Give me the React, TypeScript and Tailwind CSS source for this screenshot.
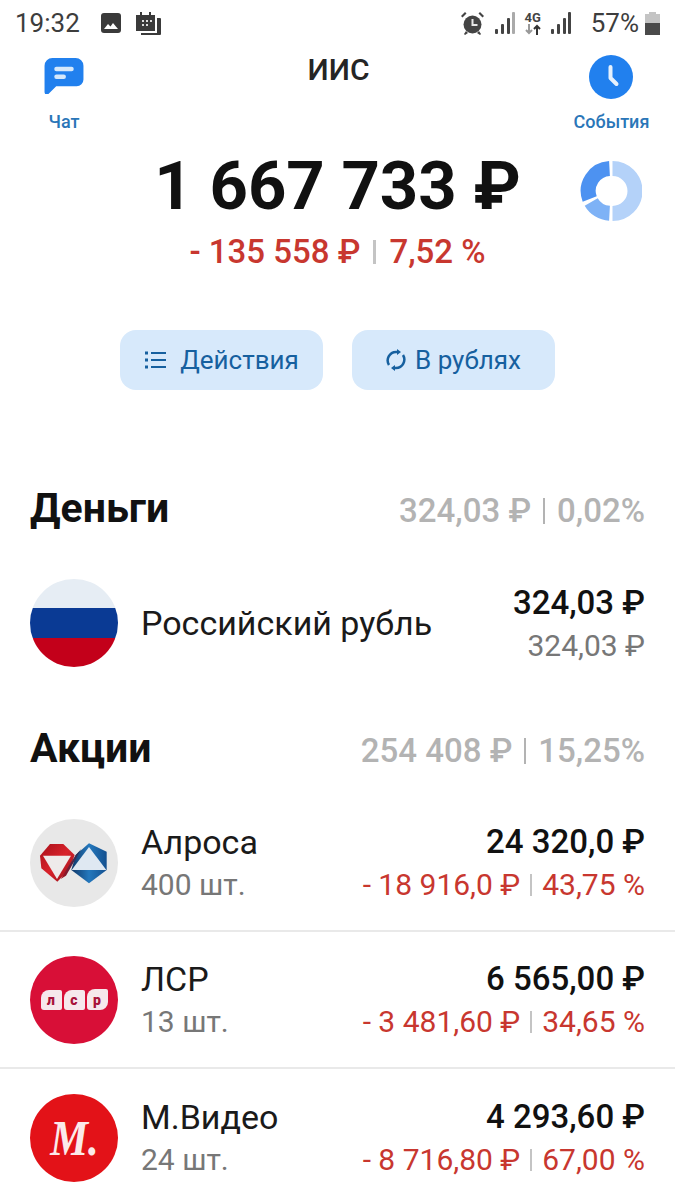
const Signal = ({ third, fourth }: { third: string; fourth: string }) => (
  <svg width="20" height="22" viewBox="0 0 20 22">
    <rect x="0" y="17" width="3" height="5" rx="1" fill="#444" />
    <rect x="6" y="12" width="3" height="10" rx="1" fill="#444" />
    <rect x="12" y="6" width="3" height="16" rx="1" fill={third} />
    <rect x="17" y="0" width="3" height="22" rx="1" fill={fourth} />
  </svg>
)

const StatusBar = () => (
  <div className="flex h-[46px] items-center justify-between pl-[15px] pr-[15px] text-[#3d3d3d]">
    <div className="flex items-center">
      <span className="text-[26px] leading-none">19:32</span>
      <svg width="20" height="20" viewBox="0 0 20 20" className="ml-[21px]">
        <rect width="20" height="20" rx="3" fill="#3a3a3a" />
        <path d="M3 16l4-5 2.500 2.500L12 10l5 6z" fill="#fff" />
      </svg>
      <svg width="25" height="23" viewBox="0 0 25 23" className="ml-[15px]">
        <path d="M0 3h4V0h2v3h7V0h2v3h4v16H0z" fill="#3a3a3a" />
        <path d="M6 8h2v2H6zM10 8h2v2h-2zM14 8h2v2h-2zM6 12h2v2H6zM10 12h2v2h-2z" fill="#ddd" />
        <path d="M21 6h3a1 1 0 0 1 1 1v15a1 1 0 0 1-1 1H5v-2h16z" fill="#3a3a3a" />
      </svg>
    </div>
    <div className="flex items-center">
      <svg width="23" height="23" viewBox="0 0 23 23">
        <circle cx="11.500" cy="12.500" r="9" fill="#444" />
        <path d="M10.500 7h2v5h4v2h-6z" fill="#e8e8e8" />
        <path d="M0 4l4-4 1.500 1.500-4 4zM23 4l-4-4-1.500 1.500 4 4zM5 19l-2 3 1 1 3-2zM18 19l2 3-1 1-3-2z" fill="#444" />
      </svg>
      <div className="ml-[11px]">
        <Signal third="#444" fourth="#aaa" />
      </div>
      <div className="ml-[10px] flex w-[16px] flex-col items-center">
        <span className="whitespace-nowrap text-[13px] font-bold leading-[12px] text-[#444]">4G</span>
        <svg width="16" height="11" viewBox="0 0 16 11" fill="none" strokeWidth="2">
          <path d="M4 0v9M1 6l3 3 3-3" stroke="#999" />
          <path d="M12 11V2M9 5l3-3 3 3" stroke="#333" />
        </svg>
      </div>
      <div className="ml-[10px]">
        <Signal third="#444" fourth="#444" />
      </div>
      <span className="ml-[20px] text-[26px] leading-none">57%</span>
      <svg width="15" height="23" viewBox="0 0 15 23" className="ml-[6px]">
        <path d="M4 0h7v2h4v21H0V2h4z" fill="#c4c4c4" />
        <path d="M0 11h15v12H0z" fill="#4a4a4a" />
      </svg>
    </div>
  </div>
)

const TopBar = () => (
  <div className="flex items-start justify-between pl-[40px] pr-[25px]">
    <div className="flex w-[48px] flex-col items-center">
      <svg width="40" height="36" viewBox="0 0 40 37" className="mt-[12px]">
        <path d="M8 0h24a8 8 0 0 1 8 8v14a7 7 0 0 1-7 7H12l-8 8c-2 1.500-4 .5-4-2V8a8 8 0 0 1 8-8z" fill="#2180ee" />
        <rect x="10" y="9" width="20" height="4.500" rx="2.250" fill="#d5e8fb" />
        <rect x="10" y="17" width="12" height="4.500" rx="2.250" fill="#d5e8fb" />
      </svg>
      <span className="mt-[17px] whitespace-nowrap text-[18px] font-medium leading-[22px] text-[#2a76b8]">Чат</span>
    </div>
    <span className="ml-[16px] mt-[6px] text-[30px] font-medium leading-[36px] text-[#252525]">ИИС</span>
    <div className="flex w-[77px] flex-col items-center">
      <svg width="44" height="44" viewBox="0 0 44 44" className="mt-[9px]">
        <circle cx="22" cy="22" r="22" fill="#2180ee" />
        <path d="M21.500 12v11l6 6" fill="none" stroke="#e6f1fd" strokeWidth="4" strokeLinecap="round" strokeLinejoin="round" />
      </svg>
      <span className="mt-[12px] whitespace-nowrap text-[18px] font-medium leading-[22px] text-[#2a76b8]">События</span>
    </div>
  </div>
)

const Donut = () => (
  <svg width="62" height="62" viewBox="0 0 62 62" fill="none" strokeWidth="15">
    <path d="M32.500 8.500A22.500 22.500 0 0 1 32.500 53.500" stroke="#b4d2f9" />
    <path d="M29.500 53.300A22.500 22.500 0 0 1 11.200 42" stroke="#7eb2f6" />
    <path d="M9.700 39A22.500 22.500 0 0 1 29.500 8.500" stroke="#4d92f1" />
  </svg>
)

const Summary = () => (
  <div className="relative mt-[14px] flex flex-col items-center">
    <div className="text-[67px] font-bold leading-[78px] text-[#111]">1 667 733 ₽</div>
    <div className="absolute left-[580px] top-[13px]">
      <Donut />
    </div>
    <div className="mt-[7px] flex items-center text-[33px] font-medium leading-[40px] text-[#c8372f]">
      <span>- 135 558 ₽</span>
      <span className="mx-[13px] h-[24px] w-[3px] bg-[#c4c4c4]" />
      <span>7,52 %</span>
    </div>
  </div>
)

const Buttons = () => (
  <div className="mt-[58px] flex justify-center gap-[29px]">
    <div className="flex h-[60px] w-[203px] items-center justify-center rounded-[16px] bg-[#d7e9fb] text-[26px] text-[#16609f]">
      <svg width="24" height="22" viewBox="0 0 24 22" fill="none" stroke="#16609f" strokeWidth="2">
        <path d="M7 4h15M7 11h15M7 18h15" />
        <path d="M1 4h3M1 11h3M1 18h3" strokeWidth="3" />
      </svg>
      <span className="ml-[12px] leading-[32px]">Действия</span>
    </div>
    <div className="flex h-[60px] w-[203px] items-center justify-center rounded-[16px] bg-[#d7e9fb] text-[26px] text-[#16609f]">
      <svg width="20" height="22" viewBox="0 0 20 22" fill="none" stroke="#16609f" strokeWidth="2.500">
        <path d="M3 16A8.500 8.500 0 0 1 10 3h2" />
        <path d="M17 6a8.500 8.500 0 0 1-7 13H8" />
        <path d="M11 0l4 3-4 3zM9 16l-4 3 4 3z" fill="#16609f" stroke="none" />
      </svg>
      <span className="ml-[9px] leading-[32px]">В рублях</span>
    </div>
  </div>
)

const SectionHeader = ({ title, value, percent }: { title: string; value: string; percent: string }) => (
  <div className="flex items-center justify-between px-[30px]">
    <span className="text-[41px] font-bold leading-[46px] text-[#111]">{title}</span>
    <div className="flex items-center pt-[6px] text-[33px] font-medium leading-[40px] text-[#b3b3b3]">
      <span>{value}</span>
      <span className="mx-[12px] h-[26px] w-[2px] bg-[#b3b3b3]" />
      <span>{percent}</span>
    </div>
  </div>
)

const Flag = () => (
  <div className="flex size-[88px] flex-col overflow-hidden rounded-full">
    <div className="h-[29px] bg-[#e6edf4]" />
    <div className="h-[30px] bg-[#0a3a94]" />
    <div className="h-[29px] bg-[#c3001a]" />
  </div>
)

const AlrosaLogo = () => (
  <div className="flex size-[88px] items-center justify-center rounded-full bg-[#e8e8e8]">
    <svg width="80" height="55" viewBox="0 0 240 165">
      <defs>
        <linearGradient id="alrosaRed" x1="0" y1="0" x2="1" y2="1">
          <stop offset="0" stopColor="#a8101a" />
          <stop offset="0.5" stopColor="#d9222b" />
          <stop offset="1" stopColor="#8e0e18" />
        </linearGradient>
        <linearGradient id="alrosaBlue" x1="0" y1="0" x2="1" y2="0">
          <stop offset="0" stopColor="#0f3768" />
          <stop offset="0.5" stopColor="#2478bd" />
          <stop offset="1" stopColor="#14508f" />
        </linearGradient>
        <linearGradient id="alrosaLink" x1="0" y1="1" x2="1" y2="0">
          <stop offset="0" stopColor="#a8101a" />
          <stop offset="1" stopColor="#0f3768" />
        </linearGradient>
      </defs>
      <path d="M18 62L48 27h40l34 33-14 40-38 40-48-40z" fill="url(#alrosaRed)" />
      <path d="M27 62h84l-42 70z" fill="#eeeaea" />
      <path d="M165 25l53 25v55l-53 40-53-40 13-45z" fill="url(#alrosaBlue)" />
      <path d="M165 36l52 69H113z" fill="#dfe8f2" />
      <path d="M125 60L142 42 96 122 80 132z" fill="url(#alrosaLink)" />
    </svg>
  </div>
)

const LsrLogo = () => (
  <div className="flex size-[88px] items-center justify-center rounded-full bg-[#d80f37]">
    <div className="flex items-center gap-[2px] text-[14px] font-black leading-none text-[#a8123a]">
      <div className="flex h-[20px] w-[21px] items-center justify-center rounded-tl-[8px] rounded-tr-[2px] rounded-br-[2px] rounded-bl-[3px] bg-[#f6e8ec]">л</div>
      <div className="flex h-[20px] w-[21px] items-center justify-center rounded-tl-[8px] rounded-tr-[2px] rounded-br-[2px] rounded-bl-[3px] bg-[#f6e8ec]">с</div>
      <div className="flex h-[21px] w-[21px] items-center justify-center rounded-tl-[8px] rounded-tr-[2px] rounded-br-[8px] rounded-bl-[3px] bg-[#f6e8ec]">р</div>
    </div>
  </div>
)

const MvideoLogo = () => (
  <div className="flex size-[88px] items-center justify-center rounded-full bg-[#e31218]">
    <span className="scale-x-[0.85] font-['Liberation_Serif',serif] text-[50px] font-bold italic leading-none text-[#fbeaea]">М.</span>
  </div>
)

type Row = {
  name: string
  qty: string
  price: string
  delta: string
  pct: string
  logo: React.ReactNode
}

const rows: Row[] = [
  { name: 'Алроса', qty: '400 шт.', price: '24 320,0 ₽', delta: '- 18 916,0 ₽', pct: '43,75 %', logo: <AlrosaLogo /> },
  { name: 'ЛСР', qty: '13 шт.', price: '6 565,00 ₽', delta: '- 3 481,60 ₽', pct: '34,65 %', logo: <LsrLogo /> },
  { name: 'М.Видео', qty: '24 шт.', price: '4 293,60 ₽', delta: '- 8 716,80 ₽', pct: '67,00 %', logo: <MvideoLogo /> },
]

const StockRow = ({ row, last }: { row: Row; last: boolean }) => (
  <div className={last ? 'flex h-[137px] shrink-0 items-center px-[30px]' : 'flex h-[137px] items-center border-b-2 border-[#e9e9e9] px-[30px]'}>
    {row.logo}
    <div className="ml-[23px] flex flex-col">
      <span className="text-[34px] leading-[40px] text-[#1a1a1a]">{row.name}</span>
      <span className="mt-[5px] text-[30px] leading-[36px] text-[#777]">{row.qty}</span>
    </div>
    <div className="ml-auto flex flex-col items-end">
      <span className="text-[33px] font-medium leading-[40px] text-[#111]">{row.price}</span>
      <div className="mt-[5px] flex items-center text-[30px] leading-[36px] text-[#c8372f]">
        <span>{row.delta}</span>
        <span className="mx-[10px] h-[22px] w-[2px] bg-[#c4c4c4]" />
        <span>{row.pct}</span>
      </div>
    </div>
  </div>
)

export default function App() {
  return (
    <div className="h-[1200px] w-[675px] overflow-hidden bg-white font-['Roboto',sans-serif]">
      <StatusBar />
      <TopBar />
      <Summary />
      <Buttons />
      <div className="mt-[95px]">
        <SectionHeader title="Деньги" value="324,03 ₽" percent="0,02%" />
      </div>
      <div className="mt-[48px] flex items-center px-[30px]">
        <Flag />
        <span className="ml-[23px] text-[34px] leading-[40px] text-[#1a1a1a]">Российский рубль</span>
        <div className="ml-auto flex flex-col items-end">
          <span className="text-[33px] font-medium leading-[40px] text-[#111]">324,03 ₽</span>
          <span className="mt-[5px] text-[30px] leading-[36px] text-[#777]">324,03 ₽</span>
        </div>
      </div>
      <div className="mt-[58px]">
        <SectionHeader title="Акции" value="254 408 ₽" percent="15,25%" />
      </div>
      <div className="mt-[24px]">
        {rows.map((row, i) => (
          <StockRow key={row.name} row={row} last={i === rows.length - 1} />
        ))}
      </div>
    </div>
  )
}
